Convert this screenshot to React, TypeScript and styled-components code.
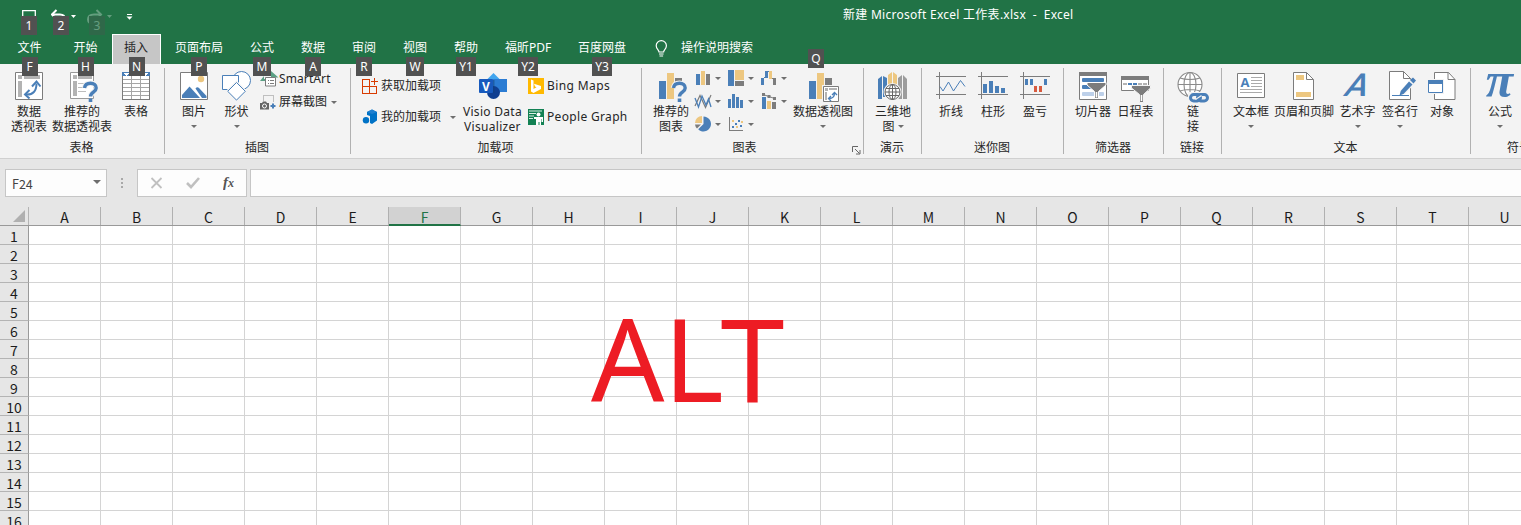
import React from "react";
import styled, { createGlobalStyle, css } from "styled-components";

const BLUE = "#4a7fb8";
const SAND = "#edc780";
const GREY = "#7c7c7c";
const GREEN = "#217346";

const Global = createGlobalStyle`
  *, *::before, *::after { box-sizing: border-box; }
  body {
    margin: 0;
    overflow: hidden;
    font-family: "Noto Sans", "Noto Sans CJK SC", sans-serif;
    font-size: 12px;
    color: #262626;
  }
  svg { display: block; flex: none; }
`;

const Window = styled.div`
  width: 1521px;
  height: 525px;
  overflow: hidden;
  display: flex;
  flex-direction: column;
  background: #fff;
  white-space: nowrap;
`;

const TitleBar = styled.div`
  height: 34px;
  flex: none;
  display: flex;
  background: ${GREEN};
  color: #fff;
`;

const QuickAccess = styled.div`
  width: 843px;
  display: flex;
  padding: 8px 0 0 21px;
`;

const QuickItem = styled.div<{ $width: number; $dim?: boolean }>`
  position: relative;
  width: ${(p) => p.$width}px;
  height: 16px;
  opacity: ${(p) => (p.$dim ? 0.3 : 1)};
`;

const Title = styled.div`
  height: 30px;
  line-height: 30px;
  white-space: pre;
  letter-spacing: 0.27px;
`;

const TabBar = styled.div`
  height: 30px;
  flex: none;
  display: flex;
  background: ${GREEN};
  color: #fff;
`;

const Tab = styled.div<{ $width: number; $active?: boolean }>`
  position: relative;
  width: ${(p) => p.$width}px;
  height: 30px;
  line-height: 28px;
  text-align: center;
  ${(p) =>
    p.$active &&
    css`
      background: #c6c6c6;
      color: #262626;
      border: 1px solid #fff;
      border-bottom: 0;
      line-height: 26px;
      padding-right: 1px;
    `}
`;

const Search = styled.div`
  position: relative;
  display: flex;
  gap: 13px;
  width: 177px;
  padding: 0 0 0 16px;
  line-height: 28px;
`;

const KeyTip = styled.span<{ $left?: number; $top: number; $wide?: number }>`
  position: absolute;
  z-index: 2;
  top: ${(p) => p.$top}px;
  left: ${(p) => (p.$left === undefined ? `calc(50% - ${(p.$wide ?? 16) / 2}px)` : `${p.$left}px`)};
  width: ${(p) => p.$wide ?? 16}px;
  height: 19px;
  line-height: 20px;
  text-align: center;
  background: #515151;
  color: #fff;
`;

const Ribbon = styled.div`
  height: 95px;
  flex: none;
  display: flex;
  background: #f3f3f3;
  border-bottom: 1px solid #d0d0d0;
`;

const GroupBox = styled.section<{ $width: number }>`
  position: relative;
  width: ${(p) => p.$width}px;
  flex: none;
  display: flex;
  flex-direction: column;
  &::after {
    content: "";
    position: absolute;
    right: 0;
    top: 4px;
    width: 1px;
    height: 86px;
    background: #b1b1b1;
  }
`;

const GroupBody = styled.div<{ $left: number }>`
  height: 76px;
  display: flex;
  padding-left: ${(p) => p.$left}px;
`;

const GroupFooter = styled.div<{ $launcher?: boolean }>`
  height: 15px;
  line-height: 15px;
  display: flex;
  justify-content: center;
  padding-right: ${(p) => (p.$launcher ? 17 : 2)}px;
`;

const Launcher = styled.div`
  position: absolute;
  right: 3px;
  bottom: 3px;
`;

const BigButton = styled.div<{ $width: number }>`
  width: ${(p) => p.$width}px;
  flex: none;
  display: flex;
  flex-direction: column;
  align-items: center;
  padding-top: 6px;
`;

const BigLabel = styled.div`
  margin-top: 2px;
  line-height: 15px;
  text-align: center;
  white-space: pre;
`;

const Caret = styled.i`
  display: inline-block;
  flex: none;
  width: 0;
  height: 0;
  border: 3px solid transparent;
  border-bottom-width: 0;
  border-top-color: #6e6e6e;
`;

const CaretLine = styled.div`
  display: flex;
  justify-content: center;
  padding-top: 6px;
`;

const SmallColumn = styled.div<{ $width: number; $top: number; $gap: number; $left?: number }>`
  width: ${(p) => p.$width}px;
  flex: none;
  display: flex;
  flex-direction: column;
  gap: ${(p) => p.$gap}px;
  padding-top: ${(p) => p.$top}px;
  padding-left: ${(p) => p.$left ?? 0}px;
`;

const SmallButton = styled.div<{ $caretGap?: number }>`
  height: 16px;
  display: flex;
  align-items: center;
  gap: 3px;
  line-height: 18px;
  ${Caret} {
    margin-left: ${(p) => p.$caretGap ?? 0}px;
  }
`;

const Latin = styled.span<{ $spacing: number }>`
  letter-spacing: ${(p) => p.$spacing}px;
`;

const ChartGrid = styled.div`
  display: grid;
  grid-template-columns: repeat(3, 33px);
  grid-auto-rows: 16px;
  row-gap: 7px;
  padding-top: 6px;
  margin-left: 3px;
`;

const ChartItem = styled.div`
  display: flex;
  align-items: center;
  gap: 4px;
`;

const FormulaBar = styled.div`
  height: 48px;
  flex: none;
  display: flex;
  padding: 10px 0 10px 5px;
  background: #e6e6e6;
`;

const Field = styled.div<{ $width: number }>`
  width: ${(p) => p.$width}px;
  height: 28px;
  flex: none;
  display: flex;
  align-items: center;
  background: #fdfdfd;
  border: 1px solid #c6c6c6;
`;

const NameBox = styled(Field)`
  justify-content: space-between;
  padding: 0 5px 0 6px;
  color: #444;
  font-family: "Noto Sans CJK SC", sans-serif;
  font-size: 12.5px;
  ${Caret} {
    border-width: 4px 4px 0;
    margin-top: -3px;
  }
`;

const Dots = styled.div`
  width: 30px;
  flex: none;
  display: flex;
  flex-direction: column;
  align-items: center;
  gap: 2px;
  padding-top: 9px;
  i { width: 2px; height: 2px; background: #a8a8a8; }
`;

const FormulaActions = styled(Field)`
  margin-right: 3px;
  padding-left: 12px;
  gap: 23px;
`;

const Sheet = styled.div`
  position: relative;
  flex: 1;
  min-height: 0;
  font-family: "Noto Sans CJK SC", sans-serif;
  font-size: 14px;
  color: #1c1c1c;
`;

const HeaderRow = styled.div`
  display: flex;
  width: 1549px;
  height: 19px;
  background: #e6e6e6;
  border-bottom: 1px solid #999;
`;

const Corner = styled.div`
  width: 29px;
  display: flex;
  justify-content: flex-end;
  align-items: flex-end;
  padding: 0 3px 3px 0;
  border-right: 1px solid #b4b4b4;
`;

const ColumnHead = styled.div<{ $selected?: boolean }>`
  width: 72px;
  height: 18px;
  line-height: 21px;
  text-align: center;
  border-right: 1px solid #b0b0b0;
  ${(p) =>
    p.$selected &&
    css`
      height: 19px;
      color: ${GREEN};
      background: #d2d2d2;
      border-bottom: 2px solid ${GREEN};
    `}
`;

const Row = styled.div`
  display: flex;
  width: 1549px;
  height: 19px;
`;

const RowHead = styled.div`
  width: 29px;
  height: 19px;
  line-height: 21px;
  text-align: center;
  background: #e6e6e6;
  border-right: 1px solid #999;
  border-bottom: 1px solid #b4b4b4;
`;

const Cell = styled.div`
  width: 72px;
  height: 19px;
  border-right: 1px solid #d4d4d4;
  border-bottom: 1px solid #d4d4d4;
`;

const Annotation = styled.div`
  position: absolute;
  left: 591px;
  top: 72px;
  line-height: 157px;
  font-family: "Noto Sans", sans-serif;
  font-size: 115px;
  letter-spacing: -1px;
  color: #ed1c24;
`;

type IconProps = { children: React.ReactNode; size?: number; crisp?: boolean };
const Icon = ({ children, size = 32, crisp }: IconProps) => (
  <svg width={size} height={size} viewBox={`0 0 ${size} ${size}`} fill="none" overflow="visible" shapeRendering={crisp ? "crispEdges" : "auto"}>
    {children}
  </svg>
);

const QuestionMark = ({ x }: { x: number }) => (
  <g transform={`translate(${x} 12)`}>
    <path d="M1.500 6C2 2.500 4.500 1.300 7.500 1.300c3.500 0 5.700 1.900 5.700 4.600 0 4.300-5.700 4-5.700 8.600" stroke="#f3f3f3" strokeWidth="5.500" />
    <path d="M1.500 6C2 2.500 4.500 1.300 7.500 1.300c3.500 0 5.700 1.900 5.700 4.600 0 4.300-5.700 4-5.700 8.600" stroke={BLUE} strokeWidth="3.400" />
    <path d="M5.700 16.500h3.600V20H5.700z" fill={BLUE} />
  </g>
);

const PivotIcon = () => (
  <Icon>
    <path d="M2.500 2.500h27v27h-27z" fill="#fff" stroke={GREY} />
    <path d="M5 5h4v4H5zM11 5h16v4H11zM5 11h4v16H5z" fill="#b3b3b3" />
    <path d="M13 24.500c7 .5 10.500-3.500 10.500-11" stroke={BLUE} strokeWidth="2" />
    <path d="M16.500 20l-4.500 4.500 4.500 4M19 16.500l4.500-5 4 5" stroke={BLUE} strokeWidth="2" />
  </Icon>
);

const RecommendedPivotIcon = () => (
  <Icon>
    <path d="M4.500 2.500h23v26h-23z" fill="#fff" stroke="#9a9a9a" />
    <path d="M7 5h4v4H7zM12 5h14v4H12zM7 11h4v15H7z" fill="#b3b3b3" />
    <path d="M12 13.500h12M12 17.500h8M12 21.500h8" stroke="#bdbdbd" />
    <QuestionMark x={17} />
  </Icon>
);

const TableIcon = () => (
  <Icon crisp>
    <path d="M2.500 2.500h27v27h-27z" fill="#fff" stroke={GREY} />
    <path d="M2 2h28v4H2z" fill={BLUE} />
    <path d="M11.500 6v23M20.500 6v23M3 9.500h26M3 13.500h26M3 17.500h26M3 21.500h26M3 25.500h26" stroke="#a6a6a6" />
    <path d="M4 3h5l-2.500 3zM23 3h5l-2.500 3z" fill="#fff" />
  </Icon>
);

const PictureIcon = () => (
  <Icon>
    <path d="M2.500 2.500h27v27h-27z" fill="#fff" stroke={GREY} />
    <circle cx="23" cy="9" r="3.200" fill={SAND} />
    <path d="M4 28v-3l7.500-8.500L22 28z" fill={BLUE} />
    <path d="M17.500 18.500c1-1.500 2.500-1.500 3.500-.5l7.500 8V28h-4.500z" fill={BLUE} />
  </Icon>
);

const ShapesIcon = () => (
  <Icon>
    <circle cx="20.500" cy="10.500" r="9" fill="#fff" stroke={BLUE} />
    <path d="M1.500 5.500h16v14h-16z" fill="#fff" stroke={BLUE} />
    <path d="M15.500 12.500l8.800 8.800-8.800 8.800-8.800-8.800z" fill="#fff" stroke="#f3f3f3" strokeWidth="3" />
    <path d="M15.500 12.500l8.800 8.800-8.800 8.800-8.800-8.800z" fill="#fff" stroke={BLUE} />
  </Icon>
);

const SmartArtIcon = () => (
  <Icon size={16}>
    <path d="M0 10l4-5v3h1v2zM11 0l7.500 6.500H11z" fill="#5ba084" />
    <path d="M5.500 6.500h10v8.500h-10z" fill="#fff" stroke={GREY} />
    <path d="M8 9.500h1m1 0h4M8 12.500h1m1 0h4" stroke={GREY} />
  </Icon>
);

const ScreenshotIcon = () => (
  <Icon size={16}>
    <path d="M3.500 6.500v-5h10v6" stroke="#8a8a8a" strokeDasharray="1 1" />
    <path d="M0 9h2l1-1.500h3L7 9h2v6.500H0z" fill="#666" />
    <circle cx="4.500" cy="12" r="2" stroke="#fff" />
    <path d="M10.500 12h5M13 9.500v5" stroke={BLUE} strokeWidth="2" />
  </Icon>
);

const StoreIcon = () => (
  <Icon size={16} crisp>
    <path d="M7.500 1.500h-7v14h14v-7h-14M7.500 1.500v14M12 0v7M8.500 3.500H16" stroke="#d83b01" />
  </Icon>
);

const AddinsIcon = () => (
  <Icon size={16}>
    <path d="M5 3l5-2.500L15 3v8.500L10 15l-2-1V7L5 6z" fill="#0072c6" />
    <path d="M5 3l5-2.500L15 3l-5 2z" fill="#1f80d0" />
    <circle cx="4" cy="11.300" r="3.200" fill="#0072c6" />
  </Icon>
);

const VisioIcon = () => (
  <Icon>
    <path d="M16.500 3l9 9-9 9-9-9z" fill="#41a5ee" />
    <path d="M16 9h14v13H16z" fill="#2b7cd3" />
    <circle cx="16.500" cy="22.500" r="6.500" fill="#103f91" />
    <path d="M16 10h1.500v13H16z" fill="#124078" opacity=".5" />
    <rect x="2" y="9" width="14" height="14" rx="1" fill="#185abd" />
    <text x="9" y="20.500" textAnchor="middle" fontSize="12" fontWeight="700" fontFamily="Open Sans, sans-serif" fill="#fff">V</text>
  </Icon>
);

const BingIcon = () => (
  <Icon size={16}>
    <path d="M0 0h16v16H0z" fill="#ffb900" />
    <path d="M3 1.500l2.500 1v8.500l3-1.700-1.500-.8-1-2.800L13 8v3l-7.500 4L3 13.500z" fill="#fff" />
  </Icon>
);

const PeopleIcon = () => (
  <Icon size={16}>
    <path d="M0 0h16v16H0z" fill="#128153" />
    <path d="M1 2h13M1 4.500h7M1 7h5M1 9.500h4" stroke="#d8eee4" />
    <circle cx="10.500" cy="5.500" r="2" fill="#fff" />
    <path d="M6 8h9v5h-1.500v-3H13v6h-1.500v-3h-1v3H8v-6H6z" fill="#fff" />
  </Icon>
);

const RecommendedChartIcon = () => (
  <Icon>
    <path d="M4 11h7v18H4z" fill={BLUE} />
    <path d="M12 3h7v26h-7z" fill={SAND} />
    <path d="M20 8h7v7h-7z" fill={GREY} />
    <QuestionMark x={17} />
  </Icon>
);

const PivotChartIcon = () => (
  <Icon>
    <path d="M2 11h7v18H2z" fill={BLUE} />
    <path d="M10 3h7v26h-7z" fill={SAND} />
    <path d="M18 8h7v8h-7z" fill={GREY} />
    <path d="M15 15h18v18H15z" fill="#f3f3f3" />
    <path d="M16.500 16.500h15v15h-15z" fill="#fff" stroke={GREY} />
    <path d="M18 18h3v3h-3zM22 18h8v2h-8zM18 22h2v8h-2z" fill="#b3b3b3" />
    <path d="M22 28.500c4 0 5.500-2 5.500-5.500M24 26l-2.500 2.500L24 31M25 25l2.500-2.500L30 25" stroke={BLUE} strokeWidth="1.300" />
  </Icon>
);

const MapIcon = () => (
  <Icon>
    <path d="M1 9l4-3v23H1zM6 6l4 2v19H6z" fill={BLUE} />
    <path d="M11 5l4-3v24h-4zM16 2l4 3v21h-4z" fill={SAND} />
    <path d="M21 8l4-3v24h-4zM26 5l4 4v20h-4z" fill="#9c9c9c" />
    <circle cx="15.500" cy="22" r="9" fill="#f3f3f3" />
    <g stroke="#666">
      <circle cx="15.500" cy="22" r="7.500" fill="#fff" />
      <ellipse cx="15.500" cy="22" rx="3.500" ry="7.500" />
      <path d="M15.500 14.500v15M8 22h15M9 18.500h13M9 25.500h13" />
    </g>
  </Icon>
);

const SparkAxes = () => <path d="M1 6.500h30M1 24.500h30M4.500 2v27" stroke={GREY} shapeRendering="crispEdges" />;
const LineSparkIcon = () => (
  <Icon>
    <SparkAxes />
    <path d="M5 16.500l3 4.500 5.500-9 5 9 7-10.500 4.500 6" stroke={BLUE} />
  </Icon>
);
const ColumnSparkIcon = () => (
  <Icon>
    <SparkAxes />
    <path d="M6 14h4v9H6zM12 11h4v12h-4zM18 16h4v7h-4zM24 18h4v5h-4z" fill={BLUE} />
  </Icon>
);
const WinLossIcon = () => (
  <Icon>
    <SparkAxes />
    <path d="M6 9h3v6H6zM11 9h3v6h-3zM25 9h3v6h-3z" fill={BLUE} />
    <path d="M15 16h3v6h-3zM20 16h3v6h-3z" fill="#d75b3f" />
  </Icon>
);

const SlicerIcon = () => (
  <Icon>
    <path d="M2.500 2.500h27v27h-27z" fill="#fff" stroke={GREY} />
    <path d="M2 2h28v4H2z" fill={GREY} />
    <rect x="5" y="8" width="22" height="4" rx="1" fill={BLUE} />
    <rect x="5" y="15" width="16" height="4" rx="1" fill={BLUE} />
    <rect x="5" y="22" width="22" height="4" rx="1" fill="#bdd0e9" />
    <path d="M10 12.500h19v2.500l-7.500 6.500v7h-4v-7L10 15z" fill={GREY} stroke="#fff" />
    <path d="M18.700 22h1.600v5.500h-1.600z" fill="#fff" />
  </Icon>
);

const TimelineIcon = () => (
  <Icon>
    <path d="M1.500 6.500h27v14h-27z" fill="#fff" stroke={GREY} />
    <path d="M1 6h28v4H1z" fill={GREY} />
    <path d="M3 13h4v2H3zM18 13h4v2h-4zM23 13h4v2h-4z" fill="#b3b3b3" />
    <path d="M8 13h4v2H8zM13 13h4v2h-4z" fill={BLUE} />
    <path d="M11.500 15.500h19v2.500L23.500 24.500v8h-4v-8L11.500 18z" fill={GREY} stroke="#f3f3f3" />
    <path d="M20.700 25h1.600v6h-1.600z" fill="#fff" />
  </Icon>
);

const LinkIcon = () => (
  <Icon>
    <g stroke="#8b8b8b" strokeWidth="1.100">
      <circle cx="13" cy="14.500" r="12" fill="#fff" />
      <ellipse cx="13" cy="14.500" rx="6" ry="12" />
      <path d="M13 2.500v24M1 14.500h24M3 8c5 2 15 2 20 0M3 21c5-2 15-2 20 0" />
    </g>
    <path d="M11 22h22v11H11z" fill="#f3f3f3" />
    <rect x="13.500" y="24.500" width="10" height="6.500" rx="3.200" stroke={BLUE} strokeWidth="3" />
    <rect x="20.500" y="24.500" width="10" height="6.500" rx="3.200" stroke={BLUE} strokeWidth="3" />
    <path d="M18.500 29.500l6-4" stroke="#f3f3f3" strokeWidth="1.200" />
  </Icon>
);

const TextBoxIcon = () => (
  <Icon>
    <path d="M2.500 3.500h27v24h-27z" fill="#fff" stroke={GREY} />
    <text x="10" y="17" textAnchor="middle" fontSize="13" fontWeight="700" fontFamily="Open Sans, sans-serif" fill={BLUE}>A</text>
    <path d="M16 7.500h11M16 10.500h11M16 13.500h11M16 16.500h11M5 19.500h22M5 22.500h22" stroke="#aaa" />
  </Icon>
);

const HeaderFooterIcon = () => (
  <Icon>
    <path d="M5.500 2.500h13l7 7v20h-20z" fill="#fff" stroke={GREY} />
    <path d="M18.500 2.500v7h7" stroke={GREY} />
    <path d="M8 5h8v5H8zM8 22h15v5H8z" fill={SAND} />
  </Icon>
);

const WordArtIcon = () => (
  <Icon>
    <text transform="translate(1 26) skewX(-22)" fontSize="31" fontWeight="700" fontFamily="Lato, sans-serif" fill={BLUE}>A</text>
  </Icon>
);

const SignatureIcon = () => (
  <Icon>
    <path d="M5.500 1.500h14l7 7v21h-21z" fill="#fff" stroke={GREY} />
    <path d="M19.500 1.500v7h7" stroke={GREY} />
    <path d="M8 25.500h17" stroke={BLUE} />
    <path d="M30 10L18.500 22.500" stroke="#f3f3f3" strokeWidth="6" />
    <path d="M26 10l3-2.500 3 3-2.500 3zM25 11.500l3.500 3L19.500 24l-4 1.500 1.200-4.500z" fill={BLUE} />
  </Icon>
);

const ObjectIcon = () => (
  <Icon>
    <path d="M8.500 2.500h14l6.500 7v20H8.500z" fill="#fff" stroke={GREY} />
    <path d="M22 2.500v7h7" stroke={GREY} />
    <path d="M1 9h17v15H1z" fill="#f3f3f3" />
    <path d="M2.500 10.500h14v12h-14z" fill="#fff" stroke={BLUE} />
    <path d="M2 10h15v4H2z" fill={BLUE} />
  </Icon>
);

const PiIcon = () => (
  <Icon>
    <text x="15.500" y="26.500" textAnchor="middle" fontSize="50" fontWeight="700" fontStyle="italic" fontFamily="Liberation Serif, serif" fill={BLUE}>π</text>
  </Icon>
);

const chartIcons: React.ReactNode[] = [
  <Icon size={16} crisp key="column">
    <path d="M1 4h4v11H1z" fill={BLUE} />
    <path d="M6 1h4v14H6z" fill={SAND} />
    <path d="M11 4h4v11h-4z" fill={GREY} />
  </Icon>,
  <Icon size={16} crisp key="tree">
    <path d="M0 0h6v16H0z" fill={BLUE} />
    <path d="M7 0h9v10H7z" fill={SAND} />
    <path d="M7 11h9v5H7z" fill={GREY} />
  </Icon>,
  <Icon size={16} crisp key="waterfall">
    <path d="M0 8h3v7H0zM3 7h1V1h4v1H7v6H3z" fill={BLUE} />
    <path d="M8 1h3v8H8z" fill={SAND} />
    <path d="M11 8h4v7h-3V9h-1z" fill={GREY} />
  </Icon>,
  <Icon size={16} key="line">
    <path d="M0 13L5 2.500l5.500 12L16 2" stroke={GREY} strokeWidth="1.200" />
    <path d="M0 5l3.500 9L7 3l4 9 2.500-6 2.500 8" stroke={BLUE} strokeWidth="1.300" />
  </Icon>,
  <Icon size={16} crisp key="histogram">
    <path d="M0 6h3v9H0zM4 1h3v14H4zM8 4h3v11H8zM12 7h3v8h-3z" fill={BLUE} />
  </Icon>,
  <Icon size={16} key="combo">
    <path d="M1 4h4v12H1z" fill={BLUE} />
    <path d="M6 8h4v8H6z" fill={SAND} />
    <path d="M11 9h4v7h-4z" fill={GREY} />
    <path d="M2 1.500l6 2 5.500 2" stroke={GREY} />
    <path d="M1 0h3v3H1zM6.500 2h3v3h-3zM12 4h3v3h-3z" fill={GREY} />
  </Icon>,
  <Icon size={16} key="pie">
    <path d="M8.500.5a7.500 7.500 0 11-5.300 12.800L8.500 8z" fill={BLUE} />
    <path d="M7 7H0a7 7 0 017-7z" fill={SAND} />
    <path d="M0 8.500h6L2 12.500a7 7 0 01-2-4z" fill={GREY} />
  </Icon>,
  <Icon size={16} crisp key="scatter">
    <path d="M1.500 1v13.500H15" stroke={GREY} />
    <path d="M4 10h2v2H4zM7 7h2v2H7zM10 4h2v2h-2zM12 9h2v2h-2z" fill={BLUE} />
    <path d="M4 4h2v2H4zM8 10h2v2H8zM13 5h2v2h-2z" fill={SAND} />
  </Icon>,
];

const tabs: { name: string; width: number; tip: string; wide?: number; active?: boolean }[] = [
  { name: "文件", width: 59, tip: "F" },
  { name: "开始", width: 53, tip: "H" },
  { name: "插入", width: 49, tip: "N", active: true },
  { name: "页面布局", width: 76, tip: "P" },
  { name: "公式", width: 50, tip: "M", wide: 18 },
  { name: "数据", width: 52, tip: "A" },
  { name: "审阅", width: 50, tip: "R" },
  { name: "视图", width: 52, tip: "W", wide: 18 },
  { name: "帮助", width: 50, tip: "Y1", wide: 20 },
  { name: "福昕PDF", width: 74, tip: "Y2", wide: 20 },
  { name: "百度网盘", width: 74, tip: "Y3", wide: 20 },
];

type ButtonProps = { icon: React.ReactNode; label: React.ReactNode; width?: number; caret?: boolean };
const Button = ({ icon, label, width = 42, caret }: ButtonProps) => (
  <BigButton $width={width}>
    {icon}
    <BigLabel>{label}</BigLabel>
    {caret && (
      <CaretLine>
        <Caret />
      </CaretLine>
    )}
  </BigButton>
);

type GroupProps = { name: string; width: number; left?: number; launcher?: boolean; children: React.ReactNode };
const Group = ({ name, width, left = 8, launcher, children }: GroupProps) => (
  <GroupBox $width={width}>
    <GroupBody $left={left}>{children}</GroupBody>
    <GroupFooter $launcher={launcher}>{name}</GroupFooter>
    {launcher && (
      <Launcher>
        <svg width="9" height="9" viewBox="0 0 9 9" fill="none" stroke="#666">
          <path d="M.5 6V.5H6M3 3l4.500 4.500M8 4v4H4" />
        </svg>
      </Launcher>
    )}
  </GroupBox>
);

const MapCaret = styled(Caret)`
  vertical-align: 3px;
`;

const BulbSvg = styled.svg`
  margin-top: 6px;
`;

const columns = "ABCDEFGHIJKLMNOPQRSTU".split("");
const rows = Array.from({ length: 16 }, (_, i) => i + 1);

export default function App() {
  return (
    <Window>
      <Global />
      <TitleBar>
        <QuickAccess>
          <QuickItem $width={30}>
            <svg width="16" height="16" fill="none" stroke="#fff" strokeWidth="1.300">
              <path d="M1.700 2.700h12.600V15H1.700z" />
            </svg>
            <KeyTip $left={0} $top={8}>1</KeyTip>
          </QuickItem>
          <QuickItem $width={36}>
            <svg width="26" height="16" fill="none">
              <path d="M1 6.500h8c3 0 5 2 5 5" stroke="#fff" strokeWidth="2" />
              <path d="M5.500 2L1 6.500 5.500 11" stroke="#fff" strokeWidth="2" />
              <path d="M20 7h5l-2.500 3z" fill="#fff" />
            </svg>
            <KeyTip $left={2} $top={8}>2</KeyTip>
          </QuickItem>
          <QuickItem $width={36} $dim>
            <svg width="26" height="16" fill="none">
              <path d="M14 6.500H7c-4 0-6 2-6 5s2 4 4 4" stroke="#fff" strokeWidth="2" />
              <path d="M9.500 2L14 6.500 9.500 11" stroke="#fff" strokeWidth="2" />
              <path d="M20 7h5l-2.500 3z" fill="#fff" />
            </svg>
            <KeyTip $left={2} $top={8}>3</KeyTip>
          </QuickItem>
          <QuickItem $width={20}>
            <svg width="12" height="16" fill="none">
              <path d="M4 6.500h5" stroke="#fff" />
              <path d="M3.500 8.500h6l-3 3.200z" fill="#fff" />
            </svg>
          </QuickItem>
        </QuickAccess>
        <Title>{"新建 Microsoft Excel 工作表.xlsx  -  Excel"}</Title>
      </TitleBar>

      <TabBar>
        {tabs.map((t) => (
          <Tab key={t.name} $width={t.width} $active={t.active}>
            {t.name}
            <KeyTip $top={t.active ? 22 : 23} $wide={t.wide}>{t.tip}</KeyTip>
          </Tab>
        ))}
        <Search>
          <BulbSvg width="13" height="18" viewBox="0 0 13 18" fill="none" stroke="#fff" strokeWidth="1.200">
            <path d="M4 12c0-2-2.800-3-2.800-6.200a5 5 0 0110.200 0C11.400 9 8.600 10 8.600 12zM4 14h4.600M4.500 16h3.600" />
          </BulbSvg>
          操作说明搜索
          <KeyTip $left={169} $top={15}>Q</KeyTip>
        </Search>
      </TabBar>

      <Ribbon>
        <Group name="表格" width={165}>
          <Button icon={<PivotIcon />} label={"数据\n透视表"} />
          <Button icon={<RecommendedPivotIcon />} label={"推荐的\n数据透视表"} width={64} />
          <Button icon={<TableIcon />} label="表格" width={44} />
        </Group>
        <Group name="插图" width={186}>
          <Button icon={<PictureIcon />} label="图片" caret />
          <Button icon={<ShapesIcon />} label="形状" width={43} caret />
          <SmallColumn $width={86} $top={7} $gap={7} $left={2}>
            <SmallButton>
              <SmartArtIcon />
              <Latin $spacing={0.1}>SmartArt</Latin>
            </SmallButton>
            <SmallButton $caretGap={1}>
              <ScreenshotIcon />
              屏幕截图
              <Caret />
            </SmallButton>
          </SmallColumn>
        </Group>
        <Group name="加载项" width={291} left={11}>
          <SmallColumn $width={98} $top={14} $gap={15}>
            <SmallButton>
              <StoreIcon />
              获取加载项
            </SmallButton>
            <SmallButton $caretGap={6}>
              <AddinsIcon />
              我的加载项
              <Caret />
            </SmallButton>
          </SmallColumn>
          <Button icon={<VisioIcon />} label={<Latin $spacing={0.3}>{"Visio Data\nVisualizer"}</Latin>} width={65} />
          <SmallColumn $width={110} $top={14} $gap={15} $left={3}>
            <SmallButton>
              <BingIcon />
              <Latin $spacing={0.4}>Bing Maps</Latin>
            </SmallButton>
            <SmallButton>
              <PeopleIcon />
              <Latin $spacing={0.33}>People Graph</Latin>
            </SmallButton>
          </SmallColumn>
        </Group>
        <Group name="图表" width={222} launcher>
          <Button icon={<RecommendedChartIcon />} label={"推荐的\n图表"} />
          <ChartGrid>
            {chartIcons.map((icon, i) => (
              <ChartItem key={i}>
                {icon}
                <Caret />
              </ChartItem>
            ))}
          </ChartGrid>
          <Button icon={<PivotChartIcon />} label="数据透视图" width={58} caret />
        </Group>
        <Group name="演示" width={58}>
          <Button
            icon={<MapIcon />}
            label={
              <>
                {"三维地\n图 "}
                <MapCaret />
              </>
            }
          />
        </Group>
        <Group name="迷你图" width={142}>
          <Button icon={<LineSparkIcon />} label="折线" />
          <Button icon={<ColumnSparkIcon />} label="柱形" />
          <Button icon={<WinLossIcon />} label="盈亏" />
        </Group>
        <Group name="筛选器" width={100}>
          <Button icon={<SlicerIcon />} label="切片器" />
          <Button icon={<TimelineIcon />} label="日程表" width={43} />
        </Group>
        <Group name="链接" width={58}>
          <Button icon={<LinkIcon />} label={"链\n接"} />
        </Group>
        <Group name="文本" width={249}>
          <Button icon={<TextBoxIcon />} label="文本框" caret />
          <Button icon={<HeaderFooterIcon />} label="页眉和页脚" width={64} />
          <Button icon={<WordArtIcon />} label="艺术字" width={43} caret />
          <Button icon={<SignatureIcon />} label="签名行" caret />
          <Button icon={<ObjectIcon />} label="对象" />
        </Group>
        <Group name="符号" width={98}>
          <Button icon={<PiIcon />} label="公式" caret />
        </Group>
      </Ribbon>

      <FormulaBar>
        <NameBox $width={102}>
          F24
          <Caret />
        </NameBox>
        <Dots>
          <i />
          <i />
          <i />
        </Dots>
        <FormulaActions $width={110}>
          <svg width="13" height="12" fill="none" stroke="#c0c0c0" strokeWidth="1.800">
            <path d="M1.500 1l10 10M11.500 1l-10 10" />
          </svg>
          <svg width="14" height="12" fill="none" stroke="#c0c0c0" strokeWidth="2.600">
            <path d="M1 6l4 4L13 1" />
          </svg>
          <svg width="14" height="16">
            <text x="0" y="12" fontSize="15" fontStyle="italic" fontWeight="700" fontFamily="Liberation Serif, serif" fill="#555">
              f<tspan fontSize="12">x</tspan>
            </text>
          </svg>
        </FormulaActions>
        <Field $width={1280} />
      </FormulaBar>

      <Sheet>
        <HeaderRow>
          <Corner>
            <svg width="12" height="12">
              <path d="M12 0v12H0z" fill="#b0b0b0" />
            </svg>
          </Corner>
          {columns.map((c) => (
            <ColumnHead key={c} $selected={c === "F"}>{c}</ColumnHead>
          ))}
        </HeaderRow>
        {rows.map((r) => (
          <Row key={r}>
            <RowHead>{r}</RowHead>
            {columns.map((c) => (
              <Cell key={c} />
            ))}
          </Row>
        ))}
        <Annotation>ALT</Annotation>
      </Sheet>
    </Window>
  );
}
